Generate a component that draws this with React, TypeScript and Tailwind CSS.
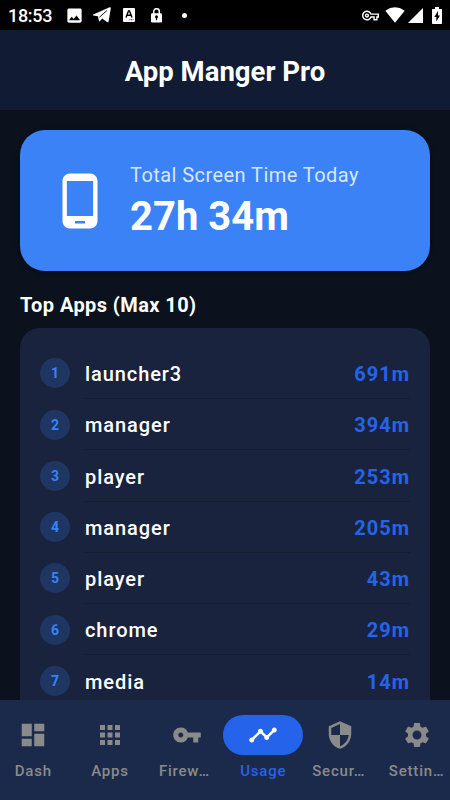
import React from "react";
import {
  MdApps,
  MdDashboard,
  MdImage,
  MdOutlineVpnKey,
  MdPhoneAndroid,
  MdSecurity,
  MdSettings,
  MdTimeline,
  MdVpnKey,
} from "react-icons/md";

const apps = [
  { name: "launcher3", time: "691m" },
  { name: "manager", time: "394m" },
  { name: "player", time: "253m" },
  { name: "manager", time: "205m" },
  { name: "player", time: "43m" },
  { name: "chrome", time: "29m" },
  { name: "media", time: "14m" },
];

const tabs = [
  { label: "Dash", Icon: MdDashboard },
  { label: "Apps", Icon: MdApps },
  { label: "Firew…", Icon: MdVpnKey, clipped: true },
  { label: "Usage", Icon: MdTimeline, active: true },
  { label: "Secur…", Icon: MdSecurity, clipped: true },
  { label: "Settin…", Icon: MdSettings, clipped: true },
];

function StatusBar() {
  return (
    <div className="flex h-[30px] shrink-0 items-center bg-black pl-2 pr-[7px] text-white">
      <span className="w-[57px] pt-px text-[18px] font-medium leading-[30px] tracking-[-0.3px]">18:53</span>
      <MdImage className="size-[19px]" />
      <svg className="ml-[9px]" width="18" height="16" viewBox="0 0 18 16">
        <path d="M.3 7.6 16.6.3Q18-.2 17.8 1.3L15.6 14.4Q15.3 15.8 14 15L9.2 11.5 6.7 14.3Q6.1 14.7 5.9 13.8L4.9 9.3.3 8.5Q-.4 8 .3 7.6z" fill="#fff" />
        <path d="M6.3 10.3 13.9 3.6" stroke="#000" strokeWidth=".9" />
      </svg>
      <svg className="ml-[12px]" width="12" height="14" viewBox="0 0 12 14">
        <rect width="12" height="14" rx="1" fill="#fff" />
        <path d="M3 9.5 5.5 3h1L9 9.5M4 7.3h4" stroke="#000" strokeWidth="1.4" fill="none" />
        <path d="M6.5 11.7h4" stroke="#000" strokeWidth=".8" strokeDasharray="1 .5" />
      </svg>
      <svg className="ml-[16px]" width="11" height="15" viewBox="0 0 11 15">
        <path d="M2.7 6V3.5a2.8 2.8 0 0 1 5.6 0V6" stroke="#fff" strokeWidth="1.5" fill="none" />
        <rect y="5.3" width="11" height="9.2" rx="1.3" fill="#fff" />
        <circle cx="5.5" cy="8.7" r="1.5" fill="#000" />
        <path d="M4.9 9h1.2v3.2H4.9z" fill="#000" />
      </svg>
      <span className="ml-[20px] size-[5px] rounded-full bg-white" />
      <MdOutlineVpnKey className="ml-auto size-[17px]" />
      <svg className="ml-[6px]" width="20" height="16" viewBox="0 0 20 16">
        <path d="M.3 3.7Q10-3 19.7 3.7L10 15.8z" fill="#fff" />
      </svg>
      <svg className="ml-[3px]" width="15" height="15" viewBox="0 0 15 15">
        <path d="M0 15 15 0v15z" fill="#fff" />
      </svg>
      <svg className="ml-[9px] mr-px" width="10" height="17" viewBox="0 0 10 17">
        <path d="M3 0h4v2h2.2q.8 0 .8.8v13.4q0 .8-.8.8H.8q-.8 0-.8-.8V2.8Q0 2 .8 2H3z" fill="#fff" />
        <path d="M6 4 2.3 10h2v4.5L8 8.5H6z" fill="#000" />
      </svg>
    </div>
  );
}

export default function App() {
  return (
    <div className="flex h-[800px] w-[450px] flex-col overflow-hidden bg-[#0b121e] font-[Roboto,sans-serif] text-white">
      <StatusBar />
      <header className="flex h-20 shrink-0 items-center justify-center bg-[#111c34] pt-[3px]">
        <h1 className="text-[27.5px] font-bold">App Manger Pro</h1>
      </header>

      <main className="min-h-0 flex-1 overflow-hidden px-5 pt-5">
        <section className="flex h-[141px] items-center rounded-[25px] bg-[#3b82f6] pl-[30px] shadow-[0_1px_4px_rgba(0,0,0,0.6)]">
          <MdPhoneAndroid className="size-[60px]" />
          <div className="ml-5 pt-[6px]">
            <p className="text-[20px] leading-[25px] tracking-[0.44px] text-[#d8e6fd]">Total Screen Time Today</p>
            <p className="text-[40px] font-bold leading-[57px]">27h 34m</p>
          </div>
        </section>

        <h2 className="mt-[19px] h-[38px] text-[20px] font-bold leading-[30px] tracking-[0.42px]">Top Apps (Max 10)</h2>

        <ul className="h-[600px] rounded-[20px] bg-[#19233e] px-5 pt-[19.75px]">
          {apps.map((app, i) => (
            <li key={i} className="flex h-[51.25px] items-center">
              <span className="mr-[15px] flex size-[30px] items-center justify-center rounded-full bg-[#1f3663] pt-px text-[14px] font-bold text-[#3b82f6]">
                {i + 1}
              </span>
              <div className="flex h-full flex-1 items-center justify-between border-b border-[#131c30] pt-[2.5px]">
                <span className="text-[20px] font-medium tracking-[0.92px]">{app.name}</span>
                <span className="text-[20px] font-bold tracking-[1px] text-[#2563eb]">{app.time}</span>
              </div>
            </li>
          ))}
        </ul>
      </main>

      <nav className="flex h-[100px] shrink-0 justify-between bg-[#1b2a4b] pt-[15px]">
        {tabs.map(({ label, Icon, active, clipped }) => (
          <div
            key={label}
            className={`flex w-[66.67px] flex-col items-center ${active ? "text-[#2563eb]" : "text-[#8a8a8a]"}`}
          >
            <div
              className={`flex h-10 w-20 shrink-0 items-center justify-center rounded-full ${active ? "bg-[#2563eb] text-white" : ""}`}
            >
              <Icon className="size-[30px]" />
            </div>
            <span
              className={`mt-[5px] whitespace-nowrap text-[15px] font-medium leading-[22px] tracking-[0.8px] ${clipped ? "w-[55.5px]" : ""}`}
            >
              {label}
            </span>
          </div>
        ))}
      </nav>
    </div>
  );
}
